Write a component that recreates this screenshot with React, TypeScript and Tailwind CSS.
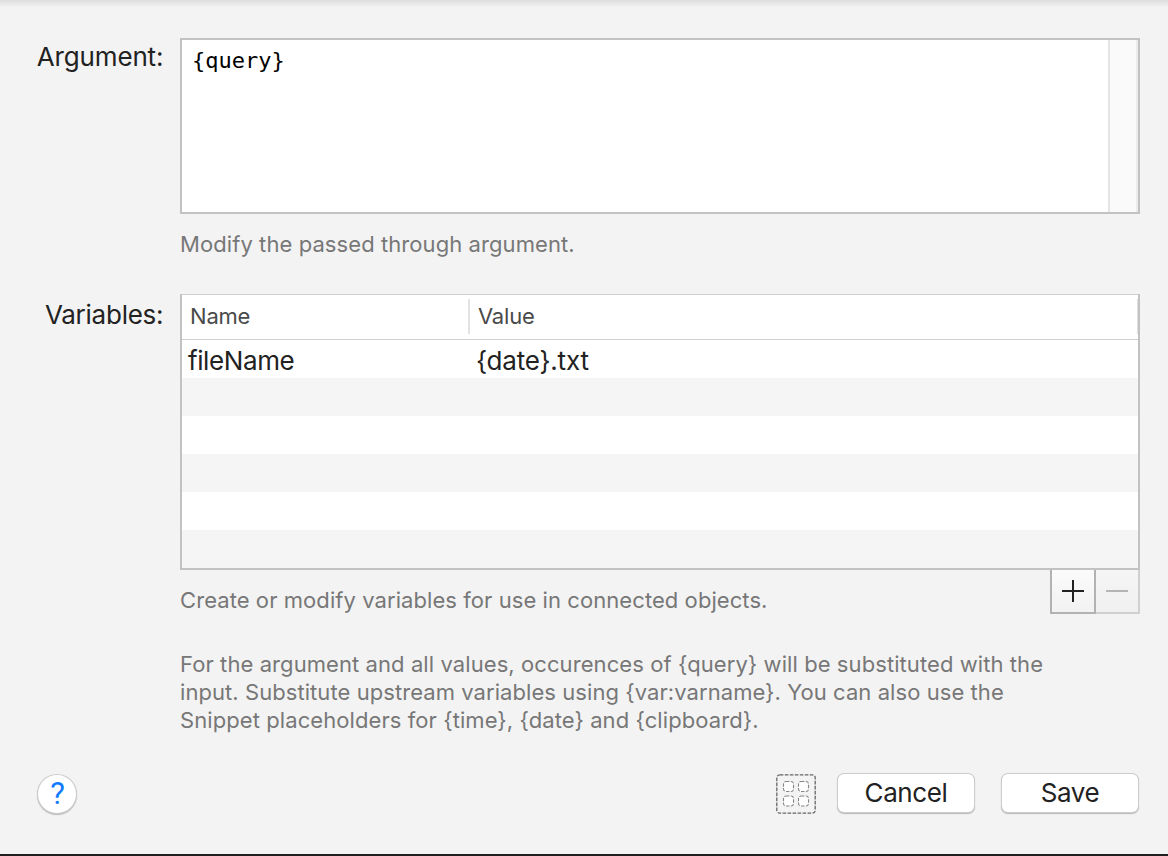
import type { ReactNode } from "react";

const stripes = [1, 2, 3, 4, 5];

function Field({ label, className, children }: { label: string; className: string; children: ReactNode }) {
  return (
    <div className="flex">
      <div className={`w-[164px] shrink-0 pr-[0.7px] text-right text-[26px] leading-8 whitespace-nowrap text-[#222] ${className}`}>
        {label}
      </div>
      <div className="ml-4 w-[960px]">{children}</div>
    </div>
  );
}

function DialogButton({ children }: { children: ReactNode }) {
  return (
    <button className="h-[38px] w-[136px] rounded-[6px] bg-white text-[26px] leading-[38px] tracking-[-0.4px] text-[#222] shadow-[0_0_0_1px_#cdcdcd,0_1px_1px_1px_#b8b8b8]">
      {children}
    </button>
  );
}

function GridIcon() {
  return (
    <svg width="40" height="40" viewBox="0 0 40 40" fill="none" className="block">
      <rect x="0.8" y="0.8" width="38.4" height="38.4" rx="3" stroke="#666" strokeWidth="1.3" strokeDasharray="3.6 1.4" />
      <g fill="#fff" stroke="#858585" strokeWidth="1.1" strokeDasharray="3.4 1.4">
        <rect x="7.5" y="7.5" width="10" height="10" rx="2.5" />
        <rect x="22.5" y="7.5" width="10" height="10" rx="2.5" />
        <rect x="7.5" y="22" width="10" height="10" rx="2.5" />
        <rect x="22.5" y="22" width="10" height="10" rx="2.5" />
      </g>
    </svg>
  );
}

export default function App() {
  return (
    <div className="flex h-[856px] w-[1168px] flex-col overflow-hidden border-b-2 border-[#1f1f1f] bg-[#f3f3f3] font-['Inter','Liberation_Sans',sans-serif] font-[440]">
      <div className="h-0.5 shrink-0 bg-[#e0e0e0]" />
      <div className="h-0.5 shrink-0 bg-[#e6e6e6]" />
      <div className="h-0.5 shrink-0 bg-[#ececec]" />

      <div className="mt-8">
        <Field label="Argument:" className="pt-[3px] tracking-[-0.15px]">
          <div className="flex h-[176px] border-2 border-[#c2c2c2] bg-white">
            <div className="flex-1 pt-2 pl-2.5 font-['DejaVu_Sans_Mono',monospace] text-[22px] leading-[26px] text-black">
              {"{query}"}
            </div>
            <div className="w-[30px] border-r-2 border-l-2 border-r-[#ececec] border-l-[#e5e5e5] bg-[#fafafa]" />
          </div>
          <p className="mt-4 text-[22px] leading-7 tracking-[0.08px] whitespace-nowrap text-[#777]">Modify the passed through argument.</p>
        </Field>
      </div>

      <div className="mt-9">
        <Field label="Variables:" className="pt-[5px] tracking-[-0.25px]">
          <div className="h-[276px] border-2 border-t border-[#c2c2c2] border-t-[#cfcfcf] bg-white">
            <div className="flex h-[45px] items-start border-b border-[#d0d0d0] pt-1 text-[22px] leading-[35px] tracking-[-0.2px] text-[#4a4a4a]">
              <div className="h-[35px] w-[288px] border-r-2 border-[#e3e3e3] pl-2">Name</div>
              <div className="h-[35px] flex-1 border-r border-[#dedede] pl-2">Value</div>
            </div>
            <div className="flex h-[38px] text-[26px] leading-[42px] text-[#222]">
              <div className="w-[288px] pl-1.5 tracking-[-0.4px]">fileName</div>
              <div className="pl-1.5 tracking-[-0.2px]">{"{date}.txt"}</div>
            </div>
            {stripes.map((n) => (
              <div key={n} className="h-[38px] nth-[2n+3]:bg-[#f5f5f5]" />
            ))}
          </div>
          <div className="flex h-11 justify-between">
            <p className="pt-4 text-[22px] leading-7 tracking-[0.07px] whitespace-nowrap text-[#777]">
              Create or modify variables for use in connected objects.
            </p>
            <div className="flex">
              <button className="flex w-[46px] items-center justify-center border-2 border-t-0 border-[#b2b2b2] bg-linear-to-b from-[#fbfbfb] to-[#f2f2f2]">
                <svg width="22" height="22" viewBox="0 0 22 22" className="block">
                  <path d="M0 11H22M11 0V22" stroke="#222" strokeWidth="2" />
                </svg>
              </button>
              <button className="flex w-11 items-center justify-center border-r-2 border-b-2 border-[#d0d0d0] bg-linear-to-b from-[#f5f5f5] to-[#f0f0f0]">
                <svg width="22" height="22" viewBox="0 0 22 22" className="block">
                  <path d="M0 11H22" stroke="#b4b4b4" strokeWidth="2" />
                </svg>
              </button>
            </div>
          </div>
          <div className="mt-9 text-[22px] leading-7 tracking-[0.08px] whitespace-nowrap text-[#777]">
            <p>{"For the argument and all values, occurences of {query} will be substituted with the"}</p>
            <p className="tracking-[0.065px]">{"input. Substitute upstream variables using {var:varname}. You can also use the"}</p>
            <p>{"Snippet placeholders for {time}, {date} and {clipboard}."}</p>
          </div>
        </Field>
      </div>

      <div className="mt-10 flex items-start pr-[30px] pl-[38px]">
        <button className="mt-px flex h-[38px] w-[38px] items-center justify-center rounded-full bg-white pb-px pl-px font-['Roboto','Inter',sans-serif] text-[31px] leading-none font-normal text-[#147aff] shadow-[0_0_0_1px_#cdcdcd,0_1px_1px_1px_#b8b8b8]">
          ?
        </button>
        <div className="ml-auto flex">
          <div className="mr-[22px]">
            <GridIcon />
          </div>
          <div className="flex gap-7">
            <DialogButton>Cancel</DialogButton>
            <DialogButton>Save</DialogButton>
          </div>
        </div>
      </div>
    </div>
  );
}
